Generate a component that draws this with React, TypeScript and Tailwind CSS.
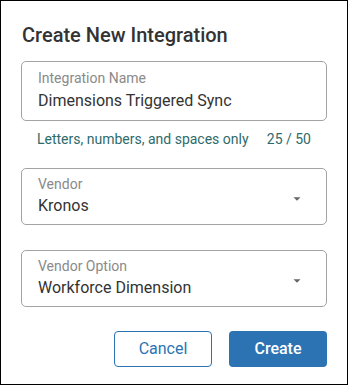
function ArrowDown() {
  return (
    <svg width="14" height="14" viewBox="0 0 24 24" className="shrink-0 self-center text-[#666]">
      <path d="M6 9l6 6 6-6z" fill="currentColor" />
    </svg>
  );
}

function TextField({ label, value }: { label: string; value: string }) {
  return (
    <div className="h-[60px] rounded-[5px] border border-[#a3a3a3] px-4 pt-[6px]">
      <div className="text-[14px] leading-5 text-[#8a8a8a]">{label}</div>
      <div className="text-[16px] leading-6 text-[#333] pt-[1px]">{value}</div>
    </div>
  );
}

function SelectField({ label, value }: { label: string; value: string }) {
  return (
    <div className="h-[57px] rounded-[5px] border border-[#a3a3a3] pl-4 pr-[22px] pt-[5px] flex flex-row items-start justify-between">
      <div>
        <div className="text-[14px] leading-5 text-[#8a8a8a]">{label}</div>
        <div className="text-[16px] leading-6 text-[#333]">{value}</div>
      </div>
      <ArrowDown />
    </div>
  );
}

export default function App() {
  return (
    <div
      className="w-[348px] h-[385px] border border-black bg-white px-5 pt-[20px] flex flex-col"
      style={{ fontFamily: "Roboto, 'Liberation Sans', sans-serif" }}
    >
      <h2 className="text-[20px] leading-7 font-medium text-[#333] pl-[1px]">Create New Integration</h2>

      <div className="mt-3">
        <TextField label="Integration Name" value="Dimensions Triggered Sync" />
        <div className="mt-2 px-4 flex flex-row justify-between text-[14px] leading-5 text-[#2e6b6b]">
          <span>Letters, numbers, and spaces only</span>
          <span>25 / 50</span>
        </div>
      </div>

      <div className="mt-[19px]">
        <SelectField label="Vendor" value="Kronos" />
      </div>

      <div className="mt-[25px]">
        <SelectField label="Vendor Option" value="Workforce Dimension" />
      </div>

      <div className="mt-[24px] flex flex-row justify-end gap-[17px]">
        <button className="w-[98px] h-9 rounded-[4px] border border-[#2b73b3] text-[#2b73b3] text-[16px] bg-white">
          Cancel
        </button>
        <button className="w-[98px] h-9 rounded-[4px] bg-[#2b73b3] text-white text-[16px] font-medium">
          Create
        </button>
      </div>
    </div>
  );
}
